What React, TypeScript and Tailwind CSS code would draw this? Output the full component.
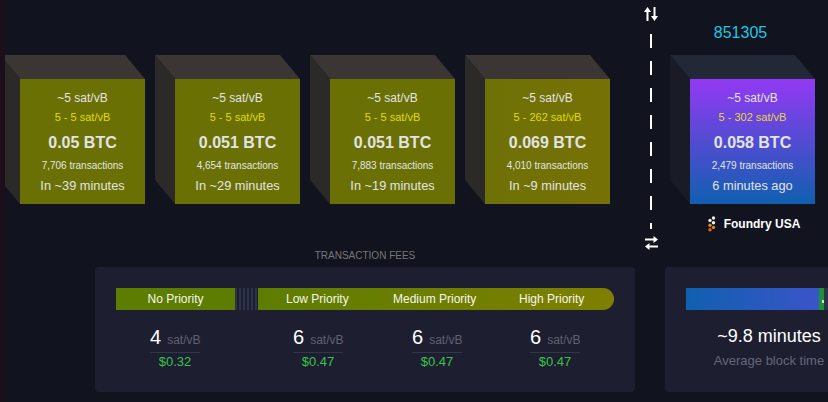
const blocks = [
  { range: "5 - 5 sat/vB", btc: "0.05 BTC", tx: "7,706 transactions", time: "In ~39 minutes", ml: "ml-[15px]", bg: "bg-[#6b7005]" },
  { range: "5 - 5 sat/vB", btc: "0.051 BTC", tx: "4,654 transactions", time: "In ~29 minutes", ml: "ml-[30px]", bg: "bg-[#6b7005]" },
  { range: "5 - 5 sat/vB", btc: "0.051 BTC", tx: "7,883 transactions", time: "In ~19 minutes", ml: "ml-[30px]", bg: "bg-[#6b7005]" },
  { range: "5 - 262 sat/vB", btc: "0.069 BTC", tx: "4,010 transactions", time: "In ~9 minutes", ml: "ml-[30px]", bg: "bg-[linear-gradient(to_right,#6e7106,#767105)]" },
];

const fees = [
  { v: "4", usd: "$0.32", cls: "ml-[34px]" },
  { v: "6", usd: "$0.47", cls: "ml-[93px]" },
  { v: "6", usd: "$0.47", cls: "ml-[69px]" },
  { v: "6", usd: "$0.47", cls: "ml-[68px]" },
];

function Faces({ top, side }: { top: string; side: string }) {
  return (
    <svg className="absolute -left-[20px] -top-[24px]" width="145" height="149" viewBox="0 0 145 149">
      <polygon points="0,0 125,0 145,24 20,24" fill={top} />
      <polygon points="0,0 20,24 20,149 0,125" fill={side} />
    </svg>
  );
}

function BlockText({ range, rangeCls, btc, tx, time }: { range: string; rangeCls: string; btc: string; tx: string; time: string }) {
  return (
    <div className="relative flex h-full flex-col items-center pt-[11px] text-center text-[#e3e3e3]">
      <div className="h-[16px] text-[12px] leading-[16px]">~5 sat/vB</div>
      <div className="h-[3px]" />
      <div className={`h-[16px] text-[11px] leading-[16px] ${rangeCls}`}>{range}</div>
      <div className="mt-[8px] h-[20px] text-[16px] font-bold leading-[20px]">{btc}</div>
      <div className="mt-[6px] h-[14px] text-[10px] leading-[14px]">{tx}</div>
      <div className="mt-[4px] h-[18px] text-[12.8px] leading-[18px]">{time}</div>
    </div>
  );
}

export default function App() {
  return (
    <div className="flex h-[402px] w-[828px] overflow-hidden bg-[#11131f] font-['Liberation_Sans',Arial,sans-serif] text-white">
      <div className="relative z-10 h-full w-[5px] shrink-0 bg-[#1b0f1b]" />
      <div className="flex min-w-0 flex-1 flex-col">
        <div className="flex h-[250px] shrink-0">
          {blocks.map((b) => (
            <div key={b.btc + b.tx} className={`w-[125px] shrink-0 pt-[79px] ${b.ml}`}>
              <div className={`relative h-[125px] w-[125px] ${b.bg}`}>
                <Faces top="#3b3533" side="#2c2a28" />
                <BlockText range={b.range} rangeCls="text-[#e0dc00]" btc={b.btc} tx={b.tx} time={b.time} />
              </div>
            </div>
          ))}

          <div className="ml-[35px] flex h-[250px] w-[12px] shrink-0 flex-col items-center pt-[7px]">
            <svg width="14" height="14" viewBox="0 0 14 14" fill="#fff" className="shrink-0">
              <polygon points="3.5,0 7,5 0,5" />
              <rect x="2.5" y="4" width="2" height="10" />
              <polygon points="10.5,14 14,9 7,9" />
              <rect x="9.5" y="0" width="2" height="10" />
            </svg>
            <div className="mt-[13px] h-[195px] w-[2px] shrink-0 bg-[repeating-linear-gradient(to_bottom,#fff_0,#fff_14px,transparent_14px,transparent_27px)]" />
            <svg width="13" height="14" viewBox="0 0 13 14" fill="#fff" className="mt-[7px] shrink-0">
              <rect x="0" y="2.5" width="10" height="2" />
              <polygon points="13,3.5 8.5,0 8.5,7" />
              <rect x="3" y="9.5" width="10" height="2" />
              <polygon points="0,10.5 4.5,7 4.5,14" />
            </svg>
          </div>

          <div className="ml-[33px] w-[125px] shrink-0">
            <div className="h-[79px] pr-[24px] pt-[24px] text-center text-[16px] leading-[18px] text-[#1cc8e3]">851305</div>
            <div className="relative h-[125px] w-[125px] bg-[linear-gradient(#9339f4,#105fb0)]">
              <Faces top="#222835" side="#191c27" />
              <BlockText range="5 - 302 sat/vB" rangeCls="text-[#e8d53c]" btc="0.058 BTC" tx="2,479 transactions" time="6 minutes ago" />
            </div>
            <div className="mt-[12px] flex items-center justify-center pl-[3px]">
              <svg width="8" height="16" viewBox="0 0 8 16" className="shrink-0">
                <circle cx="5.5" cy="2" r="1.7" fill="#eee" />
                <circle cx="2" cy="4.4" r="1.7" fill="#eee" />
                <circle cx="5.5" cy="6.8" r="1.7" fill="#eee" />
                <circle cx="2" cy="9.2" r="1.7" fill="#e8860c" />
                <circle cx="5.5" cy="11.4" r="1.7" fill="#e8860c" />
                <circle cx="2" cy="13.8" r="1.7" fill="#e06a00" />
              </svg>
              <span className="ml-[8px] text-[12px] font-bold leading-[16px]">Foundry USA</span>
            </div>
          </div>
        </div>

        <div className="ml-[90px] w-[540px] text-center text-[10px] leading-[12px] text-[#777] uppercase">Transaction fees</div>

        <div className="mt-[5px] flex">
          <div className="ml-[90px] h-[125px] w-[540px] shrink-0 rounded-[4px] bg-[#1d1f31] px-[21px] pt-[21px]">
            <div className="flex h-[22px] w-[498px] whitespace-nowrap text-[12px] leading-[22px] text-[#f6f6ec]">
              <div className="w-[119px] bg-[#5d7d01] text-center">No Priority</div>
              <div className="w-[23px] bg-[repeating-linear-gradient(to_right,#2d3348_0,#2d3348_2px,transparent_2px,transparent_4px)]" />
              <div className="flex flex-1 rounded-r-[11px] bg-[linear-gradient(to_right,#5d7d01,#7f7f00)]">
                <div className="ml-[28px] w-[61px] text-center">Low Priority</div>
                <div className="ml-[46px] w-[83px] text-center">Medium Priority</div>
                <div className="ml-[43px] w-[65px] text-center">High Priority</div>
              </div>
            </div>
            <div className="mt-[16px] flex">
              {fees.map((f, i) => (
                <div key={i} className={`w-[50px] shrink-0 text-center ${f.cls}`}>
                  <div className="whitespace-nowrap border-b border-[#33364a] text-left leading-[23px]">
                    <span className="text-[20px]">{f.v}</span>
                    <span className="ml-[6px] text-[12px] text-[#60606f]">sat/vB</span>
                  </div>
                  <div className="text-[13px] leading-[18px] text-[#38c24a]">{f.usd}</div>
                </div>
              ))}
            </div>
          </div>

          <div className="ml-[30px] h-[125px] w-[200px] shrink-0 rounded-[4px] bg-[#1d1f31] pl-[21px] pt-[21px]">
            <div className="flex h-[22px] w-[180px] bg-[#2d3348]">
              <div className="w-[133px] bg-[linear-gradient(to_right,#105fb0,#3a55c8)]" />
              <div className="relative w-[5px] bg-[#1a9436]">
                <div className="absolute bottom-[7px] left-[3px] h-[3px] w-[2px] bg-[#ddd]" />
              </div>
            </div>
            <div className="mt-[14px] w-[166px] text-center text-[18px] leading-[24px] whitespace-nowrap">~9.8 minutes</div>
            <div className="mt-[3px] w-[166px] text-center text-[13px] leading-[20px] whitespace-nowrap text-[#636679]">Average block time</div>
          </div>
        </div>
      </div>
    </div>
  );
}
